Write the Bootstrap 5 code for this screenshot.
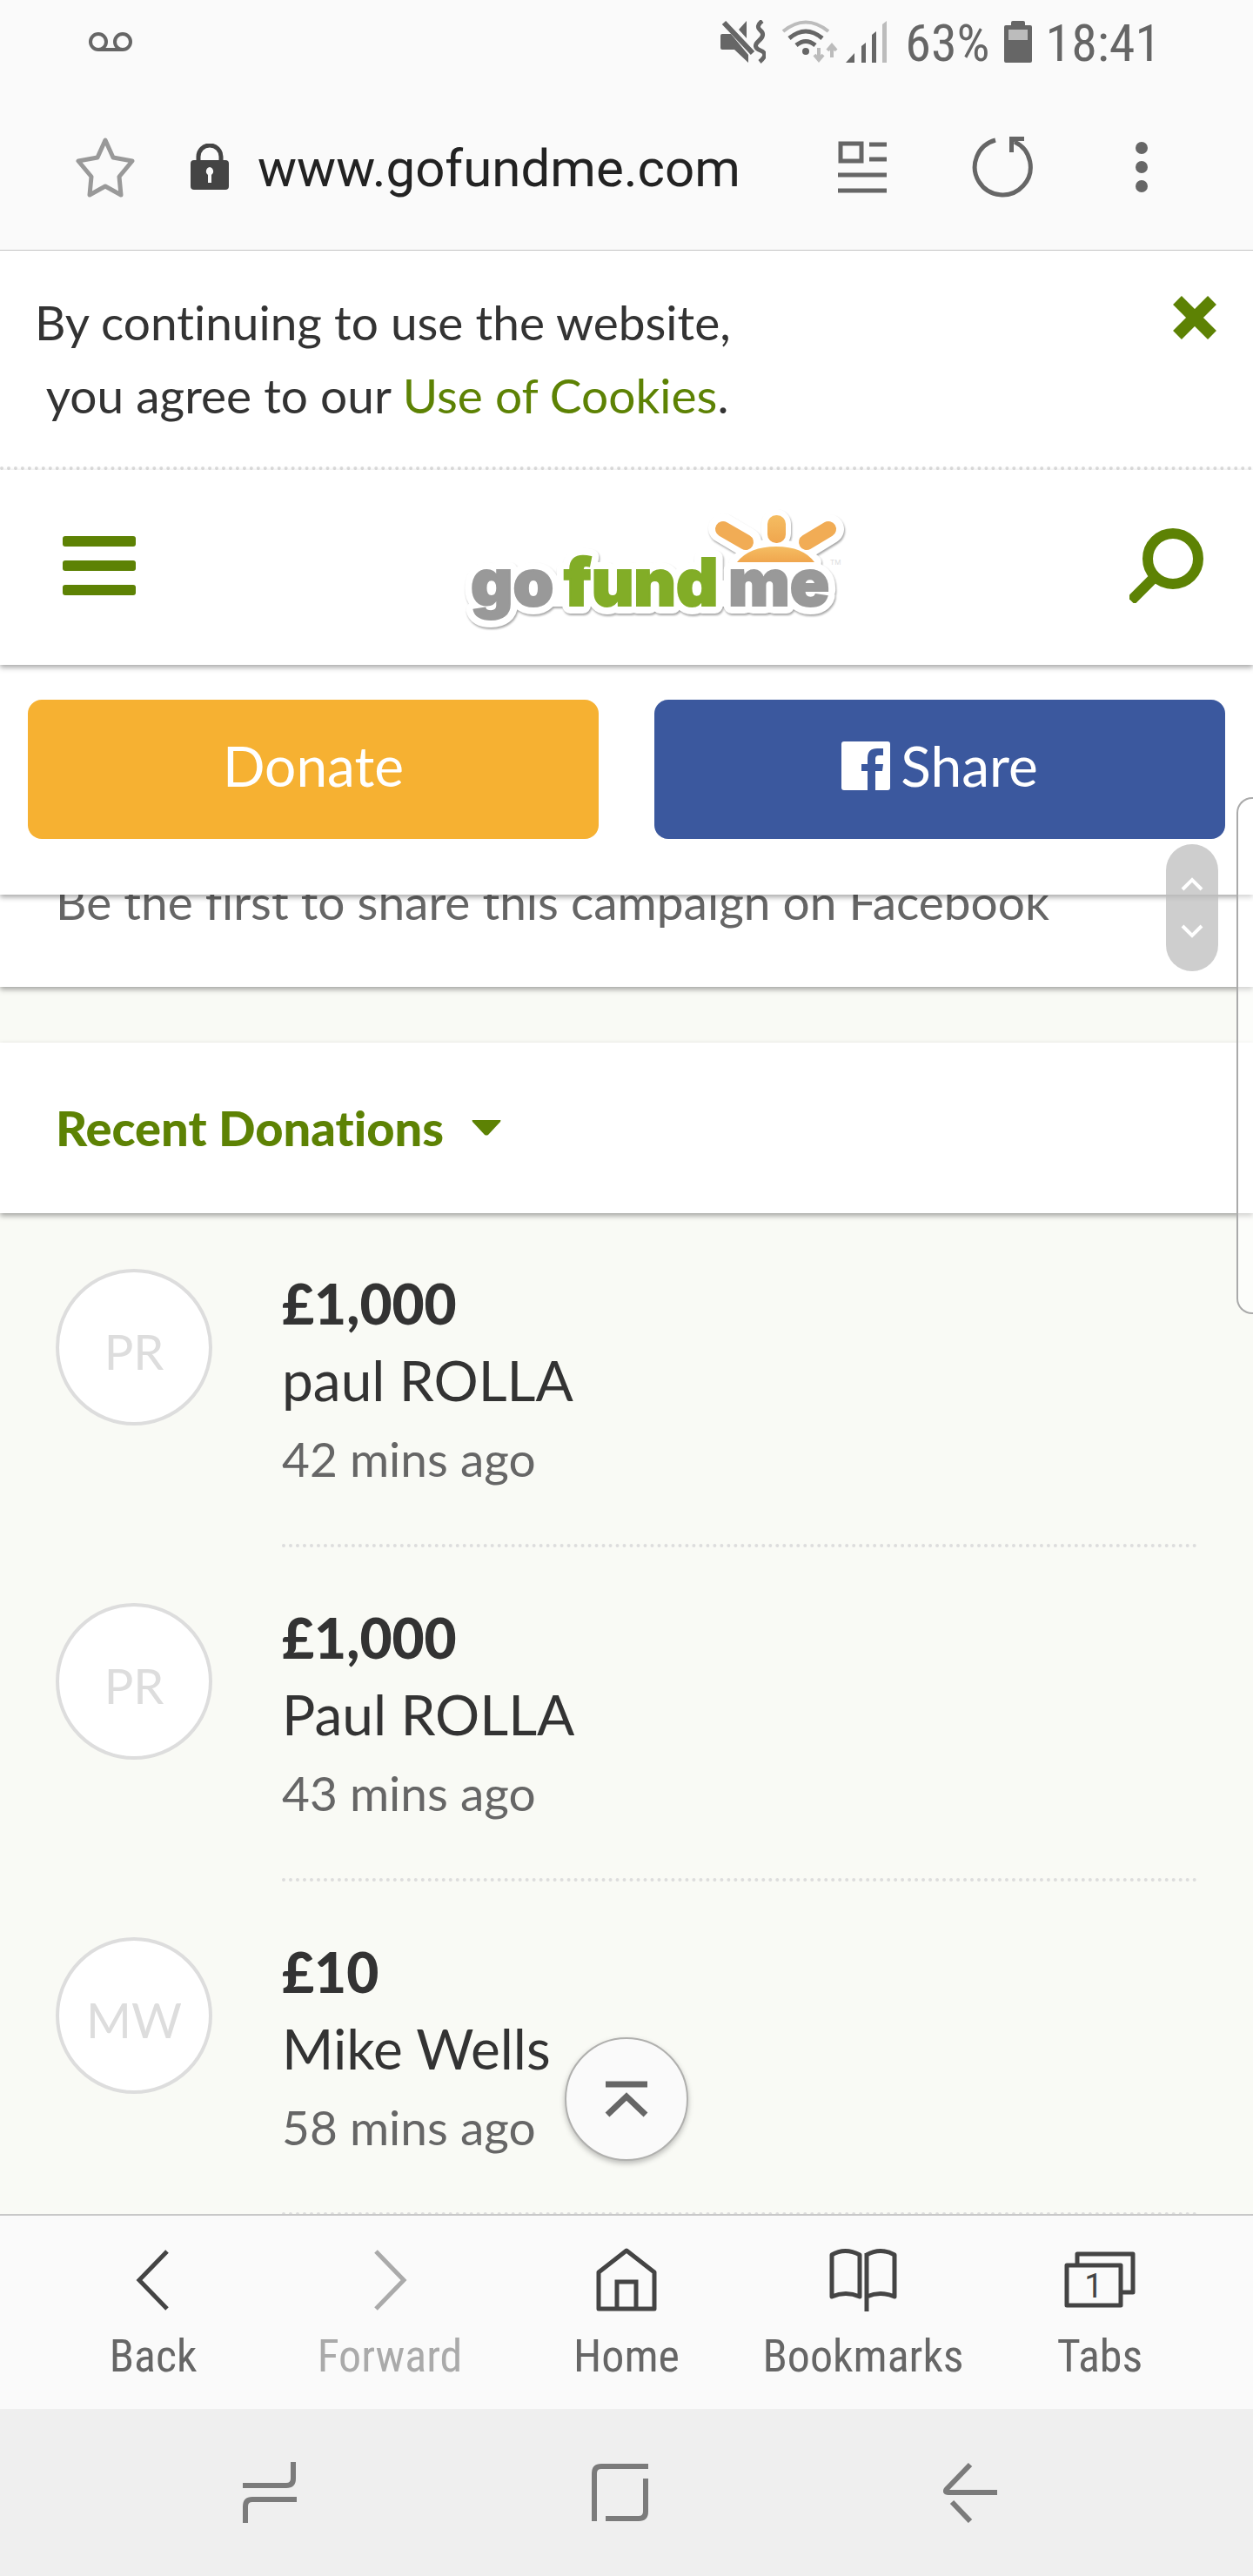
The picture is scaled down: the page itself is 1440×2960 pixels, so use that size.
<!DOCTYPE html>
<html lang="en">
<head>
<meta charset="utf-8">
<meta name="viewport" content="width=device-width, initial-scale=1">
<title>GoFundMe campaign</title>
<link rel="stylesheet" href="https://cdn.jsdelivr.net/npm/bootstrap@5.3.0/dist/css/bootstrap.min.css">
<style>
  :root { --leaf: #5d8204; --ink: #333; --ash: #666; --chrome: #fafafa; --page: #f9faf5; }
  body { background: var(--page); font-family: Lato, "Open Sans", sans-serif; font-size: 55px; line-height: 84px; font-variant-ligatures: no-common-ligatures; color: var(--ink); }
  svg { display: block; flex: none; }
  .icon-btn { padding: 0; border: 0; background: none; color: inherit; }
  .lift { box-shadow: 0 3px 6px rgba(0,0,0,.35); }

  .phone-status, .url-bar, .tool-bar { background: var(--chrome); font-family: "Roboto Condensed", Roboto, sans-serif; color: #666; }
  .phone-status { height: 96px; padding: 0 106px 0 102px; font-size: 60px; line-height: 96px; }
  .phone-status span { padding-top: 4px; }
  .wifi { margin-left: 18px; }
  .battery-level { margin-left: 20px; }
  .url-bar { height: 192px; padding: 0 101px 0 86px; border-bottom: 1px solid #c4c4c4; }
  .lock { margin-left: 62px; }
  .url-field { min-width: 0; height: 84px; margin-left: 32px; padding: 4px 0 0; border: 0; background: none; font: 60px/80px Roboto, sans-serif; color: #222; }
  .url-tools { gap: 98px; }
  .more-btn { padding: 0 20px; }

  .cookie-note { padding: 40px 42px 40px 40px; border-bottom: 4px dotted #ddd; }
  .cookie-note a { color: var(--leaf); }
  .cookie-close { color: var(--leaf); margin-top: 12px; }
  .site-head { height: 224px; padding: 0 56px 4px 72px; color: var(--leaf); z-index: 3; }
  .actions { padding: 40px 32px 64px; gap: 64px; z-index: 2; }
  .action-btn { height: 160px; padding: 0 0 8px; border: 0; border-radius: 16px; font-size: 64px; line-height: 88px; color: #fff; }
  .donate { background: #f6b132; }
  .share { background: #3b589e; gap: 12px; }
  .donate:hover { background: #e9a527; color: #fff; }
  .share:hover { background: #324c8a; color: #fff; }

  .share-note { margin-top: -34px; padding: 0 64px 56px; color: var(--ash); }
  .filter-card { margin-top: 64px; padding: 56px 64px; }
  .filter-btn { gap: 32px; color: var(--leaf); font-size: 56px; font-weight: 900; font-variant-ligatures: no-common-ligatures; }

  .donation { padding: 60px 64px 0; gap: 80px; }
  .avatar { width: 180px; height: 180px; margin-top: 4px; padding-top: 10px; border: 4px solid #ddd; font-size: 56px; color: #ddd; }
  .gift { height: 324px; line-height: 88px; border-bottom: 4px dotted #ddd; }
  .gift-sum { font-size: 64px; font-weight: 900; }
  .gift-name { font-size: 64px; }
  .gift-time { line-height: 92px; color: var(--ash); }

  .scroll-pill { top: 970px; right: 40px; width: 60px; height: 146px; border-radius: 30px; background: rgba(190,190,190,.75); z-index: 5; padding: 38px 0; }
  .edge-panel { top: 916px; right: 0; width: 19px; height: 594px; border: 2px solid #aaa; border-right: 0; border-radius: 18px 0 0 18px; background: rgba(255,255,255,.5); z-index: 5; }
  .to-top { bottom: 63px; left: 50%; width: 142px; height: 142px; margin-left: -71px; border: 2px solid #b0b0ae; border-radius: 50%; background: var(--chrome); box-shadow: 0 3px 6px rgba(0,0,0,.25); color: #666; }

  .tool-bar { margin-top: -2px; height: 224px; padding: 36px 40px 0; border-top: 2px solid #c8c8c8; font-size: 52px; line-height: 60px; z-index: 4; }
  .tool-bar svg { color: #444; }
  .tool-bar .idle, .tool-bar .idle svg { color: #aaa; }
  .tool-bar .icon-btn { gap: 20px; }
  .key-bar { height: 192px; padding: 0 124px 0 109px; background: #efefef; color: #7b7b7b; }
</style>
<script defer src="https://cdn.jsdelivr.net/npm/bootstrap@5.3.0/dist/js/bootstrap.bundle.min.js"></script>
</head>
<body class="position-relative">

<header>
  <div class="phone-status d-flex align-items-center">
    <svg class="me-auto" width="50" height="24" viewBox="0 0 50 24" fill="none" stroke="#666" stroke-width="4" aria-hidden="true"><circle cx="11" cy="12" r="9"/><circle cx="39" cy="12" r="9"/><path d="M11 21h28"/></svg>
    <svg width="52" height="50" viewBox="0 0 52 50" aria-hidden="true"><path d="M2 16h10l20 24v9L16 34H2q-2 0-2-2V18q0-2 2-2zM21 11l9-10v20z" fill="#666"/><path d="M4 3l33 35" stroke="#666" stroke-width="6"/><path d="M48 1q-8 6-2 11t-2 12 2 11-1 13" fill="none" stroke="#666" stroke-width="5"/></svg>
    <svg class="wifi" width="66" height="50" viewBox="0 0 66 50" fill="none" aria-hidden="true"><path d="M2 13Q28-8 54 13" stroke="#bcbcbc" stroke-width="4"/><path d="M9 21q19-16 38 0M17 29q11-9 22 0" stroke="#666" stroke-width="5"/><circle cx="28" cy="36" r="4" fill="#666"/><path d="M43 32v14m-5-6l5 6 5-6M58 43V29m-5 6l5-6 5 6" stroke="#bcbcbc" stroke-width="4"/></svg>
    <svg class="ms-2" width="48" height="48" viewBox="0 0 48 48" aria-hidden="true"><path d="M0 48l10-11v11zM18 48V29l5-4v23zM30 48V16l5-4v36z" fill="#666"/><path d="M42 48V4l5-4v48z" fill="#bcbcbc"/></svg>
    <span class="battery-level">63%</span>
    <svg class="ms-3" width="32" height="48" viewBox="0 0 32 48" aria-hidden="true"><path d="M8 5V2q0-2 2-2h12q2 0 2 2v3h6q2 0 2 2v39q0 2-2 2H2q-2 0-2-2V7q0-2 2-2z" fill="#666"/><path d="M5 10h22v12H5z" fill="#bcbcbc"/></svg>
    <span class="ms-3">18:41</span>
  </div>

  <form class="url-bar d-flex align-items-center">
    <button type="button" class="icon-btn" aria-label="Add bookmark"><svg width="70" height="70" viewBox="0 0 70 70" fill="none" stroke="#999" stroke-width="5" stroke-linejoin="round"><path d="M35 4l9 20 22 4-15 18 2 21-18-10-18 10 2-21L4 28l22-4z"/></svg></button>
    <svg class="lock" width="46" height="54" viewBox="0 0 46 54" aria-hidden="true"><path d="M10 22V15a13 13 0 0 1 26 0v7" fill="none" stroke="#444" stroke-width="5"/><rect x="1" y="19" width="44" height="34" rx="4" fill="#444"/><path d="M23 27a5 5 0 0 1 2 9V45h-4v-9A5 5 0 0 1 23 27z" fill="#fafafa"/></svg>
    <input class="url-field flex-grow-1" type="text" value="www.gofundme.com" aria-label="Web address">
    <div class="url-tools d-flex align-items-center">
      <button type="button" class="icon-btn" aria-label="Reader view"><svg width="56" height="60" viewBox="0 0 56 60" fill="none" stroke="#666" stroke-width="5"><path d="M3 3h24v20H3zM36 4h20M36 21h20M0 39h56M0 57h56"/></svg></button>
      <button type="button" class="icon-btn" aria-label="Reload"><svg width="70" height="70" viewBox="0 0 70 70"><path d="M27 4A32 32 0 1 0 49 6" fill="none" stroke="#666" stroke-width="5"/><path d="M43 0h17v5H50l-2 2v11h-5z" fill="#666"/></svg></button>
      <button type="button" class="icon-btn more-btn" aria-label="More options"><svg width="14" height="60" viewBox="0 0 14 60" fill="#666"><circle cx="7" cy="8" r="7"/><circle cx="7" cy="30" r="7"/><circle cx="7" cy="52" r="7"/></svg></button>
    </div>
  </form>
</header>

<main class="position-relative">
  <div class="cookie-note bg-white d-flex justify-content-between align-items-start">
    <p class="mb-0">By continuing to use the website,<br>&nbsp;you agree to our <a class="text-decoration-none" href="#cookies">Use of Cookies</a>.</p>
    <button type="button" class="icon-btn cookie-close" aria-label="Close"><svg width="50" height="50" viewBox="0 0 50 50" stroke="currentColor" stroke-width="14"><path d="M5 5l40 40M45 5L5 45"/></svg></button>
  </div>

  <nav class="site-head lift bg-white position-relative d-flex justify-content-between align-items-center">
    <button type="button" class="icon-btn" aria-label="Menu"><svg width="84" height="68" viewBox="0 0 84 68" fill="currentColor"><rect width="84" height="12" rx="3"/><rect y="28" width="84" height="12" rx="3"/><rect y="56" width="84" height="12" rx="3"/></svg></button>
    <a href="#home" aria-label="gofundme">
      <svg width="500" height="150" viewBox="477 575 500 150">
        <defs><linearGradient id="sun" x1="0" y1="0" x2="0" y2="1"><stop offset="0" stop-color="#f5bd62"/><stop offset="1" stop-color="#f0a64e"/></linearGradient></defs>
        <g style="filter:drop-shadow(1px 2px 1px rgba(0,0,0,.35))" fill="#fff" stroke="#fff" stroke-width="18" stroke-linejoin="round" stroke-linecap="round" font-family="Inter, sans-serif" font-weight="900" font-size="75">
          <path d="M847 646q42-36 88 0z"/>
          <path d="M831 607l27 16M953 608l-26 16M892 602v11" stroke-width="34"/>
          <text x="541" y="696">go</text><text x="648" y="696">fund</text><text x="837" y="696">me</text>
          <path d="M600 682h300" stroke-width="30"/>
        </g>
        <g font-family="Inter, sans-serif" font-weight="900" font-size="75" stroke-width="2">
          <text x="541" y="696" fill="#999" stroke="#999">go</text><text x="648" y="696" fill="#82ad27" stroke="#82ad27">fund</text><text x="837" y="696" fill="#999" stroke="#999">me</text>
        </g>
        <text x="954" y="649" font-family="Inter, sans-serif" font-size="8" fill="#ddd">TM</text>
        <path d="M847 646q14-18 45-18t44 18z" fill="url(#sun)"/>
        <rect x="882" y="592" width="21" height="32" rx="10" fill="url(#sun)"/>
        <path d="M831 608l26 15M952 608l-25 15" stroke="#f1ac55" stroke-width="18" stroke-linecap="round"/>
      </svg>
    </a>
    <button type="button" class="icon-btn" aria-label="Search"><svg width="86" height="86" viewBox="0 0 86 86" fill="none" stroke="currentColor"><circle cx="50" cy="35" r="29" stroke-width="12"/><path d="M29 56L6 79" stroke-width="12" stroke-linecap="square"/></svg></button>
  </nav>

  <div class="actions lift bg-white position-relative d-flex">
    <button type="button" class="btn action-btn donate flex-fill w-50">Donate</button>
    <button type="button" class="btn action-btn share flex-fill w-50 d-flex justify-content-center align-items-center"><svg width="56" height="56" viewBox="0 0 56 56" aria-hidden="true"><path d="M3 0h50q3 0 3 3v50q0 3-3 3H39V34h8l1-8h-9v-6q0-4 4-4h5V8h-7q-11 0-11 11v7h-7v8h7v22H3q-3 0-3-3V3q0-3 3-3z" fill="#fff"/></svg>Share</button>
  </div>

  <p class="share-note lift bg-white mb-0">Be the first to share this campaign on Facebook</p>

  <section class="filter-card lift bg-white">
    <button type="button" class="icon-btn filter-btn d-flex align-items-center">Recent Donations <svg width="34" height="18" viewBox="0 0 34 18" fill="currentColor" aria-hidden="true"><path d="M1 0h32q1 0 0 2L19 17q-2 1-4 0L1 2q-1-2 0-2z"/></svg></button>
  </section>

  <ul class="list-unstyled mb-0">
    <li class="donation d-flex align-items-start">
      <div class="avatar flex-shrink-0 rounded-circle bg-white d-flex justify-content-center align-items-center">PR</div>
      <div class="gift flex-grow-1"><div class="gift-sum">£1,000</div><div class="gift-name">paul ROLLA</div><div class="gift-time">42 mins ago</div></div>
    </li>
    <li class="donation d-flex align-items-start">
      <div class="avatar flex-shrink-0 rounded-circle bg-white d-flex justify-content-center align-items-center">PR</div>
      <div class="gift flex-grow-1"><div class="gift-sum">£1,000</div><div class="gift-name">Paul ROLLA</div><div class="gift-time">43 mins ago</div></div>
    </li>
    <li class="donation d-flex align-items-start">
      <div class="avatar flex-shrink-0 rounded-circle bg-white d-flex justify-content-center align-items-center">MW</div>
      <div class="gift flex-grow-1"><div class="gift-sum">£10</div><div class="gift-name">Mike Wells</div><div class="gift-time">58 mins ago</div></div>
    </li>
  </ul>

  <button type="button" class="icon-btn to-top position-absolute d-flex justify-content-center align-items-center" aria-label="Go to top"><svg width="50" height="42" viewBox="0 0 50 42" fill="none" stroke="currentColor" stroke-width="7"><path d="M1 4h48M3 39l22-21 22 21"/></svg></button>
</main>

<div class="scroll-pill position-absolute d-flex flex-column justify-content-between align-items-center" aria-hidden="true">
  <svg width="26" height="16" viewBox="0 0 26 16" fill="none" stroke="#fff" stroke-width="4"><path d="M2 14L13 3l11 11"/></svg>
  <svg width="26" height="16" viewBox="0 0 26 16" fill="none" stroke="#fff" stroke-width="4"><path d="M2 2l11 11L24 2"/></svg>
</div>
<div class="edge-panel position-absolute" aria-hidden="true"></div>

<footer>
  <nav class="tool-bar position-relative row g-0 align-items-start text-center">
    <button type="button" class="icon-btn col d-flex flex-column align-items-center"><svg width="70" height="76" viewBox="0 0 70 76" fill="none" stroke="currentColor" stroke-width="5"><path d="M51 5L19 38l32 33"/></svg>Back</button>
    <button type="button" class="icon-btn idle col d-flex flex-column align-items-center"><svg width="70" height="76" viewBox="0 0 70 76" fill="none" stroke="currentColor" stroke-width="5"><path d="M19 5l32 33-32 33"/></svg>Forward</button>
    <button type="button" class="icon-btn col d-flex flex-column align-items-center"><svg width="70" height="76" viewBox="0 0 70 76" fill="none" stroke="currentColor" stroke-width="5" stroke-linejoin="round"><path d="M3 29L35 4l32 25v42H3z"/><path d="M24 71V40h22v31" stroke-linejoin="miter"/></svg>Home</button>
    <button type="button" class="icon-btn col d-flex flex-column align-items-center"><svg width="78" height="76" viewBox="0 0 78 76" fill="none" stroke="currentColor" stroke-width="5" stroke-linejoin="round"><path d="M3 9q15-9 32 0v48q-16-7-32 0zM43 9q16-9 32 0v48q-16-7-32 0M43 7v67"/></svg>Bookmarks</button>
    <button type="button" class="icon-btn col d-flex flex-column align-items-center"><svg width="82" height="76" viewBox="0 0 82 76" fill="none" stroke="currentColor" stroke-width="5" stroke-linejoin="round"><path d="M15 20V8h64v44H66"/><path d="M3 21h62v46H3z"/><text x="34" y="58" text-anchor="middle" font-family="Roboto, sans-serif" font-size="38" fill="currentColor" stroke="none">1</text></svg>Tabs</button>
  </nav>
  <nav class="key-bar row g-0 align-items-center">
    <button type="button" class="icon-btn col d-flex justify-content-center" aria-label="Recent apps"><svg width="62" height="70" viewBox="0 0 62 70" fill="none" stroke="currentColor" stroke-width="6"><path d="M0 27h50q8 0 8-8V0M62 43H11q-8 0-8 8v19"/></svg></button>
    <button type="button" class="icon-btn col d-flex justify-content-center" aria-label="Home screen"><svg width="66" height="66" viewBox="0 0 66 66" fill="none" stroke="currentColor" stroke-width="6"><path d="M4 66V11q0-8 8-8h54M17 63h38q8 0 8-8V17"/></svg></button>
    <button type="button" class="icon-btn col d-flex justify-content-center" aria-label="System back"><svg width="62" height="70" viewBox="0 0 62 70" fill="none" stroke="currentColor" stroke-width="6"><path d="M31 3L4 31q-3 4 2 4h56M10 46l21 22" stroke-linejoin="round"/></svg></button>
  </nav>
</footer>
</body>
</html>
